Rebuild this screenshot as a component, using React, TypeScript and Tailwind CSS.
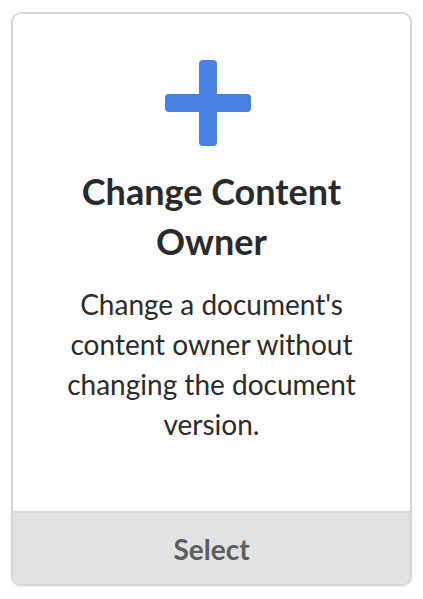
export default function App() {
  return (
    <div className="min-h-screen bg-white pt-[12px] pl-[11px]" style={{ fontFamily: 'Lato, "Open Sans", sans-serif' }}>
      <div className="flex h-[574px] w-[401px] flex-col overflow-hidden rounded-[10px] border-2 border-[#d6d6d6] bg-white shadow-[0_1px_2px_rgba(0,0,0,0.08)]">
        <div className="flex flex-1 flex-col items-center px-4 pt-[46px] text-center">
          <svg width="86" height="86" viewBox="0 0 86 86" className="mr-[7px] block">
            <rect x="34" y="0" width="18" height="86" rx="4" fill="#4a7fe4" />
            <rect x="0" y="34" width="86" height="18" rx="4" fill="#4a7fe4" />
          </svg>
          <h2 className="mt-[20px] text-[36px] font-bold leading-[50px] text-[#2a2a2a]">
            Change Content
            <br />
            Owner
          </h2>
          <p className="mt-[18px] text-[28px] leading-[40px] text-[#2b2b2b]">
            Change a document's
            <br />
            content owner without
            <br />
            changing the document
            <br />
            version.
          </p>
        </div>
        <div className="flex h-[73px] items-center justify-center border-t-2 border-[#d6d6d6] bg-[#e1e2e4]">
          <span className="text-[28px] font-bold text-[#5e5e5e]">Select</span>
        </div>
      </div>
    </div>
  );
}
